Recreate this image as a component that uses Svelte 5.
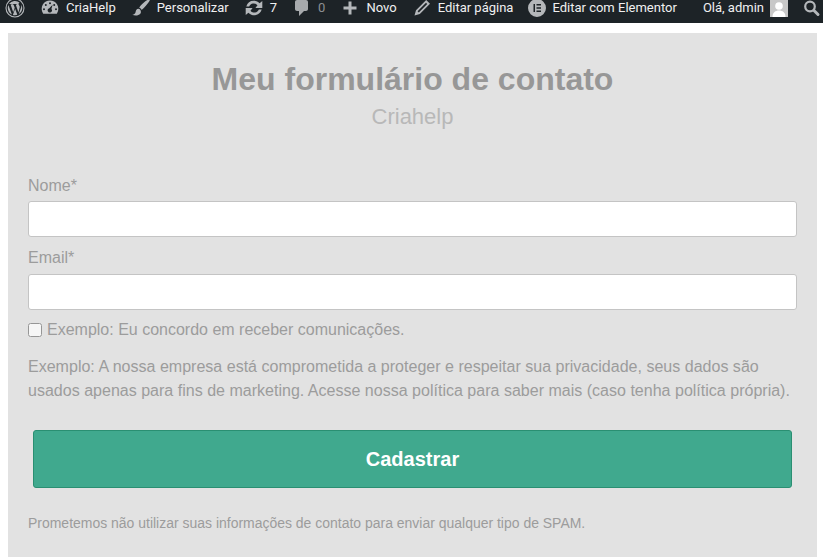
<script lang="ts">
    const barItems = [
        { icon: 'wp', text: '' },
        { icon: 'gauge', text: 'CriaHelp' },
        { icon: 'brush', text: 'Personalizar' },
        { icon: 'update', text: '7' },
        { icon: 'comment', text: '0', dim: true },
        { icon: 'plus', text: 'Novo' },
        { icon: 'pencil', text: 'Editar página' },
        { icon: 'elementor', text: 'Editar com Elementor', tight: true }
    ];
</script>

<div class="adminbar">
    <div class="bar-left">
        {#each barItems as item}
            <div class="bar-item" class:dim={item.dim} class:tight={item.tight}>
                {#if item.icon === 'wp'}
                    <svg width="20" height="20" viewBox="0 0 20 20"><circle cx="10" cy="10" r="9" fill="none" stroke="currentColor" stroke-width="1.1"/><path fill="currentColor" d="M2.800 10c0 2.900 1.700 5.400 4.100 6.500L3.400 7A7.200 7.200 0 0 0 2.800 10zm12-.4c0-.9-.3-1.500-.6-2-.3-.6-.7-1-.7-1.600 0-.6.500-1.200 1.200-1.200h.1A7.200 7.200 0 0 0 4 6h.5c.7 0 1.900-.1 1.900-.1.400 0 .4.500 0 .6l-.8.1 2.600 7.700 1.500-4.600-1.100-3c-.4 0-.7-.1-.7-.1-.4 0-.3-.6 0-.6 0 0 1.100.1 1.800.1s1.900-.1 1.900-.1c.4 0 .4.500 0 .6l-.8.1 2.600 7.600.7-2.400c.3-1 .4-1.700.4-2.300zM10.100 10.700 7.900 16.900a7.200 7.200 0 0 0 4.400-.1zm6.200-4.100a5 5 0 0 1 .1.900c0 .7-.1 1.500-.5 2.500l-2.200 6.300A7.200 7.200 0 0 0 16.300 6.600z"/></svg>
                {:else if item.icon === 'gauge'}
                    <svg width="20" height="20" viewBox="0 0 20 20"><path fill="currentColor" fill-rule="evenodd" d="M10 2.500a8.300 8.300 0 0 1 7.300 12.300l-.5.9H3.200l-.5-.9A8.300 8.300 0 0 1 10 2.500zm0 1.800a1 1 0 1 0 0 2 1 1 0 0 0 0-2zM5.800 6a1 1 0 1 0 0 2 1 1 0 0 0 0-2zm8.400 0a1 1 0 1 0 0 2 1 1 0 0 0 0-2zM4 10.200a1 1 0 1 0 0 2 1 1 0 0 0 0-2zm12 0a1 1 0 1 0 0 2 1 1 0 0 0 0-2zM12.600 6.800 9.300 10.300a2.100 2.100 0 1 0 2.100.7z"/></svg>
                {:else if item.icon === 'brush'}
                    <svg width="20" height="20" viewBox="0 0 20 20"><path fill="currentColor" d="M19 1c-.8-.7-6.300 3.200-9.300 6.500-.7.800-1.200 1.600-1.500 2.300 1 .2 2 1 2.400 2.100.8-.5 1.500-1.100 2.200-1.900C15.800 7 19.800 1.900 19 1zM7.400 10.800c-1.800.2-2.500 1.600-2.800 3.200-.2 1.200-1.200 2.500-3.300 2.800 2.200 1.100 6.300 1.100 8-1 1.300-1.600.4-4.800-1.900-5z"/></svg>
                {:else if item.icon === 'update'}
                    <svg width="20" height="20" viewBox="0 0 20 20"><path fill="currentColor" d="M10.200 2.800c2.100 0 4 .9 5.400 2.400L18.300 3v6.900h-6.900l2.100-2.600a4.900 4.900 0 0 0-8.400 1.100H2.300a7.900 7.900 0 0 1 7.900-5.600zM1.700 10.100h6.900l-2.100 2.600a4.900 4.900 0 0 0 8.400-1.100h2.800a7.900 7.900 0 0 1-13.300 3.200L1.700 17z"/></svg>
                {:else if item.icon === 'comment'}
                    <svg width="20" height="20" viewBox="0 0 20 20"><path fill="#a7aaad" d="M5 2h9c1.100 0 2 .9 2 2v7c0 1.100-.9 2-2 2h-2l-5 5v-5H5c-1.100 0-2-.9-2-2V4c0-1.100.9-2 2-2z"/></svg>
                {:else if item.icon === 'plus'}
                    <svg width="20" height="20" viewBox="0 0 20 20"><path fill="currentColor" d="M8.500 3.500h3v5h5v3h-5v5h-3v-5h-5v-3h5z"/></svg>
                {:else if item.icon === 'pencil'}
                    <svg width="20" height="20" viewBox="0 0 20 20"><path fill="currentColor" fill-rule="evenodd" d="M14.200 2l3.800 3.800L7.800 16 2.500 17.500 4 12.200zM14 4.800 5.600 13.200l1.200 1.200L15.200 6z"/></svg>
                {:else if item.icon === 'elementor'}
                    <svg width="20" height="20" viewBox="0 0 20 20"><path fill="currentColor" fill-rule="evenodd" d="M10 1a9 9 0 1 1 0 18 9 9 0 0 1 0-18zM6.500 6v8H8V6zm3 0v1.500H14V6zm0 3.200v1.600H14V9.200zm0 3.300V14H14v-1.500z"/></svg>
                {/if}
                {#if item.text}<span>{item.text}</span>{/if}
            </div>
        {/each}
    </div>
    <div class="bar-right">
        <span>Olá, admin</span>
        <svg class="avatar" width="18" height="18" viewBox="0 0 18 18"><rect width="18" height="18" fill="#c8c8c8"/><circle cx="9" cy="7" r="3.800" fill="#fff"/><path fill="#fff" d="M2.500 18c0-4.500 3-6.500 6.500-6.500s6.500 2 6.500 6.500z"/></svg>
        <svg class="search" width="20" height="20" viewBox="0 0 20 20"><circle cx="8" cy="8.500" r="4.800" fill="none" stroke="currentColor" stroke-width="2.200"/><path stroke="currentColor" stroke-width="3" stroke-linecap="round" d="M12 12.500l4 4"/></svg>
    </div>
</div>

<main class="panel">
    <h1>Meu formulário de contato</h1>
    <p class="subtitle">Criahelp</p>

    <form>
        <label class="field">
            <span>Nome*</span>
            <input type="text" />
        </label>
        <label class="field">
            <span>Email*</span>
            <input type="email" />
        </label>
        <label class="consent">
            <input type="checkbox" />
            <span>Exemplo: Eu concordo em receber comunicações.</span>
        </label>
        <p class="privacy">Exemplo: A nossa empresa está comprometida a proteger e respeitar sua privacidade, seus dados são usados apenas para fins de marketing. Acesse nossa política para saber mais (caso tenha política própria).</p>
        <button type="button">Cadastrar</button>
        <p class="spam">Prometemos não utilizar suas informações de contato para enviar qualquer tipo de SPAM.</p>
    </form>
</main>

<style>
    :global(body) {
        margin: 0;
        background: #fff;
        font-family: "Liberation Sans", Arial, sans-serif;
    }

    .adminbar {
        display: flex;
        justify-content: space-between;
        height: 23px;
        padding-right: 1px;
        background: #1d2327;
        color: #f0f0f1;
        font: 13px/15px Roboto, sans-serif;
        overflow: hidden;
    }

    .bar-left,
    .bar-right,
    .bar-item {
        display: flex;
        align-items: center;
        height: 15px;
    }

    .bar-left {
        gap: 15px;
        padding-left: 5px;
    }

    .bar-item {
        gap: 6px;
    }

    .bar-item.tight {
        margin-left: -1px;
        gap: 5px;
    }

    .bar-item svg,
    .search {
        color: #b4b7ba;
    }

    .bar-item.dim {
        color: #8c8f94;
    }

    .bar-right {
        gap: 6px;
    }

    .search {
        margin-left: 8px;
    }

    .panel {
        height: 524px;
        margin: 10px 6px 0 8px;
        padding-top: 28px;
        box-sizing: border-box;
        background: #e2e2e2;
        color: #9c9c9c;
    }

    h1 {
        margin: 0;
        font-size: 32px;
        line-height: 36px;
        font-weight: 700;
        text-align: center;
        color: #979797;
    }

    .subtitle {
        margin: 7px 0 0;
        font-size: 22px;
        line-height: 26px;
        text-align: center;
        color: #b8b8b8;
    }

    form {
        display: flex;
        flex-direction: column;
        padding: 0 20px;
        margin-top: 47px;
        font-size: 16px;
    }

    .field {
        display: flex;
        flex-direction: column;
        gap: 6px;
        margin-bottom: 10px;
        line-height: 18px;
    }

    .field + .field {
        margin-top: 2px;
        gap: 7px;
    }

    .field input {
        height: 36px;
        box-sizing: border-box;
        border: 1px solid #c4c4c4;
        border-radius: 3px;
        background: #fff;
    }

    .consent {
        display: flex;
        align-items: center;
        gap: 4px;
        line-height: 20px;
    }

    .consent input {
        width: 14px;
        height: 14px;
        margin: 0 1px 0 0;
        opacity: 0.7;
    }

    .privacy {
        margin: 14px 0 0;
        font-size: 16.04px;
        line-height: 24px;
    }

    button {
        align-self: center;
        width: 759px;
        height: 58px;
        margin-top: 28px;
        border: 1px solid #2a8f72;
        border-radius: 3px;
        background: #40a98e;
        color: #fff;
        font: 700 20px "Liberation Sans", Arial, sans-serif;
    }

    .spam {
        margin: 26px 0 0;
        font-size: 13.98px;
        line-height: 18px;
    }
</style>
